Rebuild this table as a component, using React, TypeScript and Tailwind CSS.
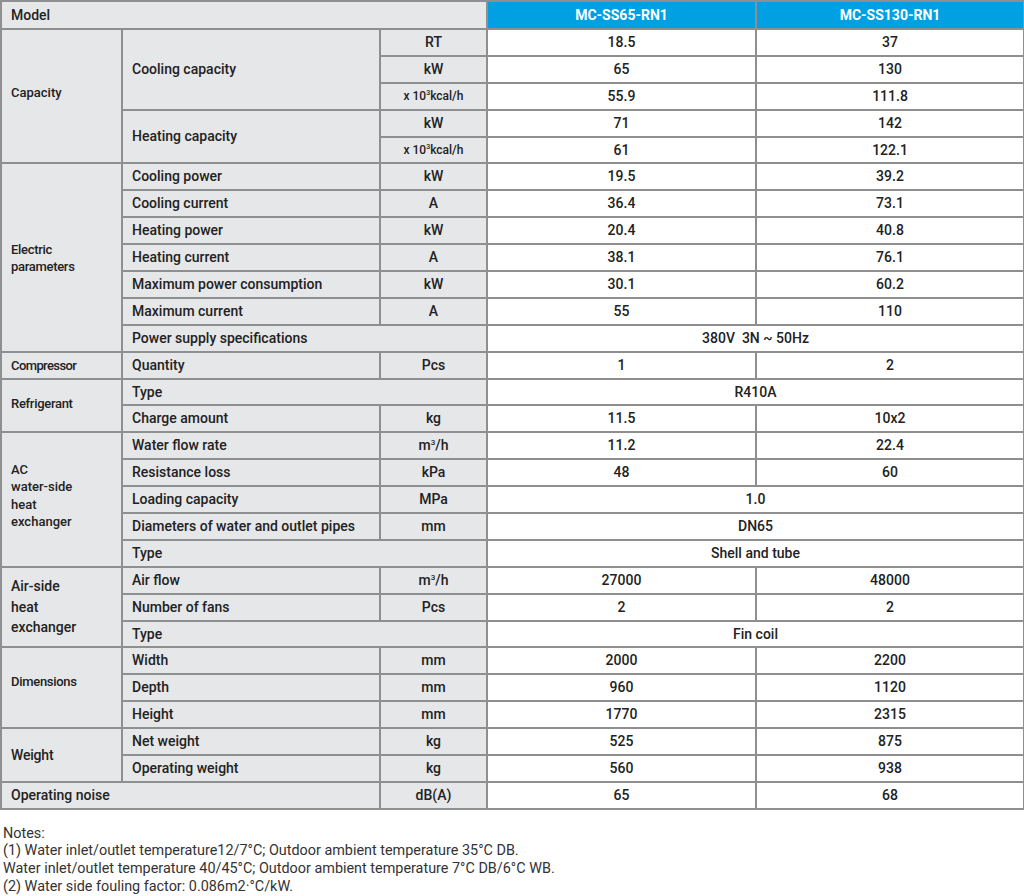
const cell = "border-2 border-[#8f8f8f] h-[26.9px] p-0 align-middle"
const grey = `${cell} bg-[#e6e7e9]`
const white = `${cell} bg-white text-center`

function Group({
  children,
  rows = 1,
  span = 1,
  className = "text-[13px] leading-[17px] tracking-[-0.3px]",
}: {
  children: React.ReactNode
  rows?: number
  span?: number
  className?: string
}) {
  return (
    <td rowSpan={rows} colSpan={span} className={`${grey} px-[9px] ${className}`}>
      {children}
    </td>
  )
}

function Label({ children, span = 1, rows = 1 }: { children: React.ReactNode; span?: number; rows?: number }) {
  return (
    <td colSpan={span} rowSpan={rows} className={`${grey} pl-[9px]`}>
      {children}
    </td>
  )
}

function Unit({ children, small = false }: { children: React.ReactNode; small?: boolean }) {
  return <td className={`${grey} text-center ${small ? "text-[12px]" : ""}`}>{children}</td>
}

function Val({ children, span = 1 }: { children: React.ReactNode; span?: number }) {
  return (
    <td colSpan={span} className={white}>
      {children}
    </td>
  )
}

const kcal = (
  <>
    x 10<sup className="text-[7px] -top-[5px]">3</sup>kcal/h
  </>
)
const m3h = (
  <>
    m<sup className="text-[8px] -top-[5px]">3</sup>/h
  </>
)

export default function App() {
  return (
    <div className="w-[1024px] h-[896px] bg-white text-[#222] font-['Roboto','Liberation_Sans',sans-serif] overflow-hidden">
      <table className="w-[1023px] table-fixed border-collapse font-medium text-[14px]">
        <colgroup>
          <col className="w-[121px]" />
          <col className="w-[258px]" />
          <col className="w-[107px]" />
          <col className="w-[269px]" />
          <col className="w-[268px]" />
        </colgroup>
        <tbody>
          <tr>
            <td colSpan={3} className={`${grey} h-[28px] pl-[9px]`}>Model</td>
            <td className={`${cell} h-[28px] bg-[#00a0e3] text-white text-center font-bold`}>MC-SS65-RN1</td>
            <td className={`${cell} h-[28px] bg-[#00a0e3] text-white text-center font-bold`}>MC-SS130-RN1</td>
          </tr>

          {/* capacity */}
          <tr>
            <Group rows={5} className="text-[13px] leading-[17px] pb-[8px]">Capacity</Group>
            <Label rows={3}>Cooling capacity</Label>
            <Unit>RT</Unit>
            <Val>18.5</Val>
            <Val>37</Val>
          </tr>
          <tr>
            <Unit>kW</Unit>
            <Val>65</Val>
            <Val>130</Val>
          </tr>
          <tr>
            <Unit small>{kcal}</Unit>
            <Val>55.9</Val>
            <Val>111.8</Val>
          </tr>
          <tr>
            <Label rows={2}>Heating capacity</Label>
            <Unit>kW</Unit>
            <Val>71</Val>
            <Val>142</Val>
          </tr>
          <tr>
            <Unit small>{kcal}</Unit>
            <Val>61</Val>
            <Val>122.1</Val>
          </tr>

          {/* electric */}
          <tr>
            <Group rows={7}>
              Electric
              <br />
              parameters
            </Group>
            <Label>Cooling power</Label>
            <Unit>kW</Unit>
            <Val>19.5</Val>
            <Val>39.2</Val>
          </tr>
          <tr>
            <Label>Cooling current</Label>
            <Unit>A</Unit>
            <Val>36.4</Val>
            <Val>73.1</Val>
          </tr>
          <tr>
            <Label>Heating power</Label>
            <Unit>kW</Unit>
            <Val>20.4</Val>
            <Val>40.8</Val>
          </tr>
          <tr>
            <Label>Heating current</Label>
            <Unit>A</Unit>
            <Val>38.1</Val>
            <Val>76.1</Val>
          </tr>
          <tr>
            <Label>Maximum power consumption</Label>
            <Unit>kW</Unit>
            <Val>30.1</Val>
            <Val>60.2</Val>
          </tr>
          <tr>
            <Label>Maximum current</Label>
            <Unit>A</Unit>
            <Val>55</Val>
            <Val>110</Val>
          </tr>
          <tr>
            <Label span={2}>Power supply specifications</Label>
            <Val span={2}>380V&nbsp; 3N ~ 50Hz</Val>
          </tr>

          {/* compressor */}
          <tr>
            <Group className="text-[13px] leading-[17px] tracking-[-0.6px]">Compressor</Group>
            <Label>Quantity</Label>
            <Unit>Pcs</Unit>
            <Val>1</Val>
            <Val>2</Val>
          </tr>

          {/* refrigerant */}
          <tr>
            <Group rows={2} className="text-[13px] leading-[17px] tracking-[-0.3px] pb-[4px]">
              Refrigerant
            </Group>
            <Label span={2}>Type</Label>
            <Val span={2}>R410A</Val>
          </tr>
          <tr>
            <Label>Charge amount</Label>
            <Unit>kg</Unit>
            <Val>11.5</Val>
            <Val>10x2</Val>
          </tr>

          {/* water side */}
          <tr>
            <Group rows={5} className="text-[13px] leading-[17.3px] pb-[8px]">
              AC
              <br />
              water-side
              <br />
              heat
              <br />
              exchanger
            </Group>
            <Label>Water flow rate</Label>
            <Unit>{m3h}</Unit>
            <Val>11.2</Val>
            <Val>22.4</Val>
          </tr>
          <tr>
            <Label>Resistance loss</Label>
            <Unit>kPa</Unit>
            <Val>48</Val>
            <Val>60</Val>
          </tr>
          <tr>
            <Label>Loading capacity</Label>
            <Unit>MPa</Unit>
            <Val span={2}>1.0</Val>
          </tr>
          <tr>
            <Label>Diameters of water and outlet pipes</Label>
            <Unit>mm</Unit>
            <Val span={2}>DN65</Val>
          </tr>
          <tr>
            <Label span={2}>Type</Label>
            <Val span={2}>Shell and tube</Val>
          </tr>

          {/* air side */}
          <tr>
            <Group rows={3} className="text-[14px] leading-[20.5px]">
              Air-side
              <br />
              heat
              <br />
              exchanger
            </Group>
            <Label>Air flow</Label>
            <Unit>{m3h}</Unit>
            <Val>27000</Val>
            <Val>48000</Val>
          </tr>
          <tr>
            <Label>Number of fans</Label>
            <Unit>Pcs</Unit>
            <Val>2</Val>
            <Val>2</Val>
          </tr>
          <tr>
            <Label span={2}>Type</Label>
            <Val span={2}>Fin coil</Val>
          </tr>

          {/* dimensions */}
          <tr>
            <Group rows={3} className="text-[13px] leading-[17px] tracking-[-0.3px] pb-[12px]">
              Dimensions
            </Group>
            <Label>Width</Label>
            <Unit>mm</Unit>
            <Val>2000</Val>
            <Val>2200</Val>
          </tr>
          <tr>
            <Label>Depth</Label>
            <Unit>mm</Unit>
            <Val>960</Val>
            <Val>1120</Val>
          </tr>
          <tr>
            <Label>Height</Label>
            <Unit>mm</Unit>
            <Val>1770</Val>
            <Val>2315</Val>
          </tr>

          {/* weight */}
          <tr>
            <Group rows={2} className="text-[14px] leading-[17px] tracking-[-0.2px]">
              Weight
            </Group>
            <Label>Net weight</Label>
            <Unit>kg</Unit>
            <Val>525</Val>
            <Val>875</Val>
          </tr>
          <tr>
            <Label>Operating weight</Label>
            <Unit>kg</Unit>
            <Val>560</Val>
            <Val>938</Val>
          </tr>

          <tr>
            <Group span={2} className="text-[14px] leading-[17px]">
              Operating noise
            </Group>
            <Unit>dB(A)</Unit>
            <Val>65</Val>
            <Val>68</Val>
          </tr>
        </tbody>
      </table>

      <div className="mt-[15px] pl-[3px] text-[14.4px] leading-[17.6px] text-[#333]">
        <p>Notes:</p>
        <p>(1) Water inlet/outlet temperature12/7°C; Outdoor ambient temperature 35°C DB.</p>
        <p>Water inlet/outlet temperature 40/45°C; Outdoor ambient temperature 7°C DB/6°C WB.</p>
        <p>(2) Water side fouling factor: 0.086m2·°C/kW.</p>
      </div>
    </div>
  )
}
